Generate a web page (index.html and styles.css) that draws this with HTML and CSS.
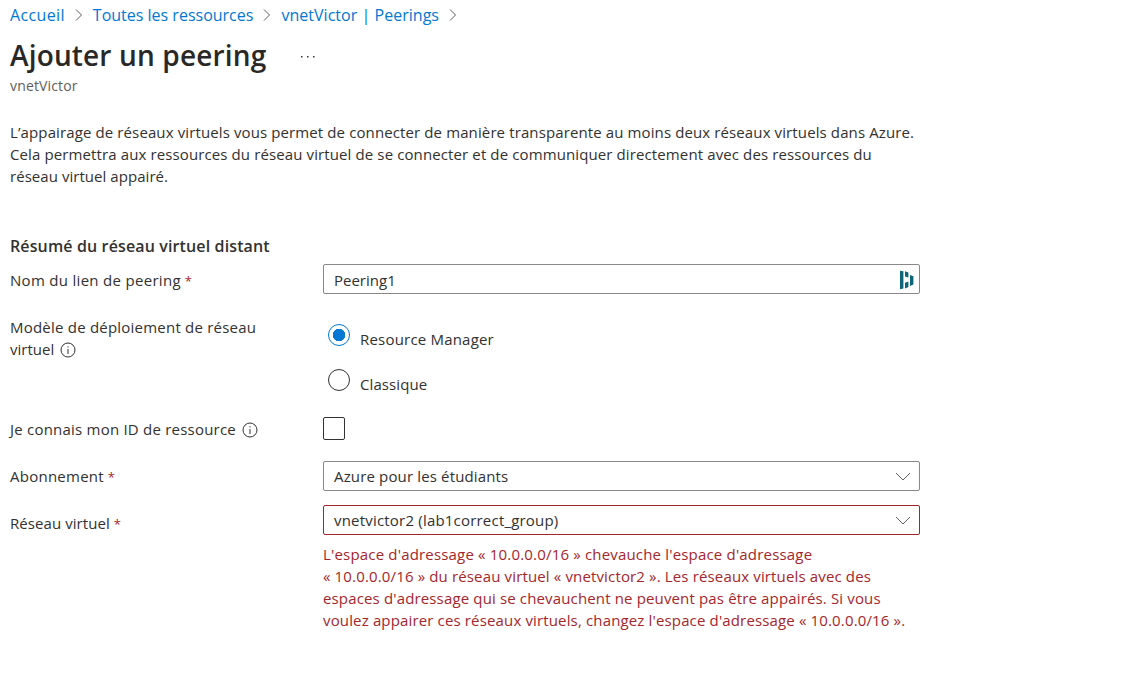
FILE: index.html
```html
<!DOCTYPE html>
<html lang="fr">
<head>
<meta charset="utf-8">
<title>Ajouter un peering</title>
<link rel="stylesheet" href="styles.css">
</head>
<body>
<nav class="crumbs">
<a class="c1">Accueil</a>
<svg class="sep" viewBox="0 0 8 14"><path d="M1 1.5 6.5 7 1 12.500"/></svg>
<a class="c2">Toutes les ressources</a>
<svg class="sep" viewBox="0 0 8 14"><path d="M1 1.5 6.5 7 1 12.500"/></svg>
<a class="c3">vnetVictor | Peerings</a>
<svg class="sep" viewBox="0 0 8 14"><path d="M1 1.5 6.5 7 1 12.500"/></svg>
</nav>
<header class="head">
<h1>Ajouter un peering</h1>
<svg class="more" viewBox="0 0 14 2"><path d="M0 0h1.500v1.500H0zM6 0h1.500v1.500H6zM12 0h1.500v1.500H12z"/></svg>
</header>
<div class="subtitle">vnetVictor</div>
<p class="intro"><span class="i1">L’appairage de réseaux virtuels vous permet de connecter de manière transparente au moins deux réseaux virtuels dans Azure.</span><br><span class="i2">Cela permettra aux ressources du réseau virtuel de se connecter et de communiquer directement avec des ressources du</span><br><span class="i3">réseau virtuel appairé.</span></p>
<h2>Résumé du réseau virtuel distant</h2>
<main class="form">
<div class="row name-row">
<label><span class="l1">Nom du lien de peering</span> <b class="req">*</b></label>
<div class="field"><span class="v1">Peering1</span>
<svg class="dash" viewBox="0 0 14 20"><path d="M0 .7l3.400.6v17.200L0 19.200zM5 1.300l3.400 1.200v5L5 6.500zM5 12.800l3.400-1.300v5.500L5 18.500zM10 5l3.400 1.200v8.300L10 16z"/></svg></div>
</div>
<div class="row model-row">
<label><span class="l2">Modèle de déploiement de réseau</span><br><span class="l3">virtuel</span><svg class="info" viewBox="0 0 16 16"><circle cx="8" cy="8" r="7"/><path d="M8 7v5M8 4.300v1.200"/></svg></label>
<div class="radios">
<div class="option"><span class="radio on"></span><span class="v2">Resource Manager</span></div>
<div class="option"><span class="radio"></span><span class="v3">Classique</span></div>
</div>
</div>
<div class="row id-row">
<label><span class="l4">Je connais mon ID de ressource</span><svg class="info" viewBox="0 0 16 16"><circle cx="8" cy="8" r="7"/><path d="M8 7v5M8 4.300v1.200"/></svg></label>
<span class="check"></span>
</div>
<div class="row sub-row">
<label><span class="l5">Abonnement</span> <b class="req">*</b></label>
<div class="field"><span class="v4">Azure pour les étudiants</span><svg class="chev" viewBox="0 0 16 9"><path d="M1 1 8 8l7-7"/></svg></div>
</div>
<div class="row net-row">
<label><span class="l6">Réseau virtuel</span> <b class="req">*</b></label>
<div class="field invalid"><span class="v5">vnetvictor2 (lab1correct_group)</span><svg class="chev" viewBox="0 0 16 9"><path d="M1 1 8 8l7-7"/></svg></div>
</div>
<p class="error"><span class="e1">L'espace d'adressage « 10.0.0.0/16 » chevauche l'espace d'adressage</span><br><span class="e2">« 10.0.0.0/16 » du réseau virtuel « vnetvictor2 ». Les réseaux virtuels avec des</span><br><span class="e3">espaces d'adressage qui se chevauchent ne peuvent pas être appairés. Si vous</span><br><span class="e4">voulez appairer ces réseaux virtuels, changez l'espace d'adressage « 10.0.0.0/16 ».</span></p>
</main>
</body>
</html>
```
FILE: styles.css
```css
* { box-sizing: border-box; }
body {
  margin: 0;
  padding: 4px 10px 0;
  background: #fff;
  color: #323130;
  font: 15px/22px "Open Sans", "Noto Sans", sans-serif;
  white-space: nowrap;
}
svg { display: block; fill: none; flex: none; }
.crumbs { display: flex; align-items: center; height: 22px; font-size: 16px; color: #0078d4; }
.sep { width: 8px; height: 14px; margin: 0 10px; stroke: #605e5c; }
.c1 { letter-spacing: .36px; }
.c3 { letter-spacing: .03px; }
h1 { margin: 0; font-size: 28px; line-height: 38px; font-weight: 600; color: #292827; letter-spacing: .16px; }
.head { display: flex; align-items: center; gap: 35px; height: 38px; margin-top: 10px; }
.more { width: 14px; height: 2px; fill: #323130; margin-top: 4px; }
.subtitle { height: 20px; margin-top: 2px; font-size: 14px; line-height: 20px; color: #605e5c; letter-spacing: .15px; }
.intro { margin: 25px 0 0; }
.i1, .i2 { letter-spacing: .115px; }
.i3 { letter-spacing: .05px; }
h2 { margin: 48px 0 0; font-size: 16px; line-height: 22px; font-weight: 600; letter-spacing: .13px; }
.form { margin-top: 7px; }
.row { display: grid; grid-template-columns: 313px 597px; align-items: start; }
.row label { padding-top: 5px; }
.l1 { letter-spacing: .3px; }
.l2, .l4 { letter-spacing: .22px; }
.l5 { letter-spacing: .25px; }
.l6 { letter-spacing: .07px; }
.v2 { letter-spacing: .2px; }
.v3 { letter-spacing: .1px; }
.v4 { letter-spacing: .15px; }
.v5 { letter-spacing: .2px; }
.e1 { letter-spacing: .18px; }
.e2, .e3, .e4 { letter-spacing: .147px; }
.req { font-size: 13px; line-height: 1; font-weight: 400; color: #a4262c; }
.field {
  display: flex; align-items: center; justify-content: space-between;
  height: 30px; padding: 2px 9px 0 10px; border: 1px solid #8a8886; border-radius: 2px;
}
.sub-row .field, .net-row .field { padding: 0 8px 0 10px; }
.field.invalid { border-color: #a4262c; }
.dash { width: 14px; height: 20px; margin: -1px -4px 0 0; fill: #0e6478; }
.chev { width: 16px; height: 9px; stroke: #605e5c; margin-top: 1px; }
.model-row { margin-top: 17px; height: 106px; }
.info { display: inline-block; width: 16px; height: 16px; margin-left: 6px; vertical-align: -3px; stroke: #323130; }
.radios { padding: 13px 0 0 5px; }
.option { display: flex; gap: 10px; height: 45px; }
.option > span:last-child { margin-top: 4px; }
.radio { width: 22px; height: 22px; border: 1px solid #323130; border-radius: 50%; }
.radio.on { border-color: #0078d4; background: radial-gradient(circle, #0078d4 6px, transparent 6.500px); }
.id-row { height: 44px; }
.id-row label { padding-top: 1px; }
.check { width: 22px; height: 23px; border: 1px solid #323130; border-radius: 2px; }
.sub-row label { padding-top: 4px; }
.net-row { margin-top: 14px; }
.net-row label { padding-top: 7px; }
.error { margin: 8px 0 0 313px; color: #a4262c; }
```
